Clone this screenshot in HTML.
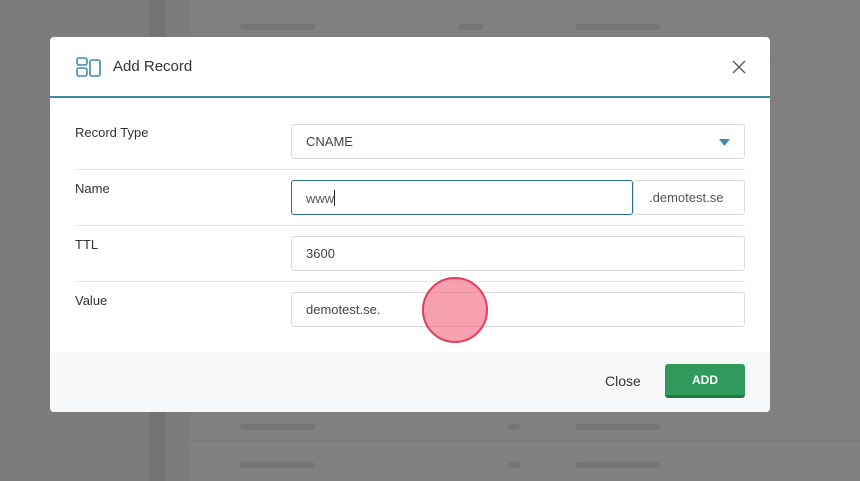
<!DOCTYPE html>
<html><head><style>
*{box-sizing:border-box;margin:0;padding:0}
body{width:860px;height:481px;overflow:hidden;background:#7c7c7c;font-family:"Liberation Sans",sans-serif;position:relative}
.strip{position:absolute;left:150px;top:0;width:16px;height:481px;background:#737373}
.tbl{position:absolute;left:190px;top:0;right:0;height:481px;background:#808080}
.rowb{position:absolute;left:190px;right:0;height:1px;background:#7a7a7a}
.ghost{position:absolute;height:6px;background:#757575;border-radius:3px}
.modal{position:absolute;left:50px;top:37px;width:720px;height:375px;background:#fff;border-radius:4px;overflow:hidden}
.hdr{height:61px;border-bottom:2px solid #3f8aa8;position:relative}
.title{position:absolute;left:63px;top:21px;font-size:15px;color:#333}
.foot{position:absolute;left:0;right:0;top:315px;bottom:0;background:#f7f8fa}
.lbl{position:absolute;left:25px;font-size:13px;color:#333}
.inp{position:absolute;left:241px;width:454px;height:35px;border:1px solid #dcdcdc;border-radius:3px;font-size:13px;color:#444;padding:9px 14px}
.sep{position:absolute;left:25px;width:670px;height:1px;background:#e6e6e6}
</style></head><body>
<div class="tbl"></div><div class="strip"></div>
<div class="rowb" style="top:60px"></div><div class="rowb" style="top:440px"></div>
<div class="ghost" style="left:240px;top:24px;width:75px"></div>
<div class="ghost" style="left:458px;top:24px;width:25px"></div>
<div class="ghost" style="left:575px;top:24px;width:85px"></div>
<div class="ghost" style="left:240px;top:424px;width:75px"></div>
<div class="ghost" style="left:508px;top:424px;width:12px"></div>
<div class="ghost" style="left:575px;top:424px;width:85px"></div>
<div class="ghost" style="left:240px;top:462px;width:75px"></div>
<div class="ghost" style="left:508px;top:462px;width:12px"></div>
<div class="ghost" style="left:575px;top:462px;width:85px"></div>
<div class="modal">
 <div class="hdr">
  <svg style="position:absolute;left:26px;top:20px" width="26" height="20" viewBox="0 0 26 20" fill="none" stroke="#3f8aa8" stroke-width="1.6"><rect x="1" y="1" width="10" height="7" rx="2"/><rect x="1" y="11" width="10" height="8" rx="2"/><rect x="14" y="3" width="10" height="16" rx="2"/></svg>
  <div class="title">Add Record</div>
  <svg style="position:absolute;left:682px;top:23px" width="14" height="14" viewBox="0 0 14 14" stroke="#555" stroke-width="1.3"><path d="M1 1L13 13M13 1L1 13"/></svg>
 </div>
 <div class="lbl" style="top:88px">Record Type</div>
 <div class="inp" style="top:87px">CNAME<svg style="position:absolute;right:14px;top:14px" width="11" height="7"><path d="M0 0H11L5.5 7Z" fill="#3f8aa8"/></svg></div>
 <div class="sep" style="top:132px"></div>
 <div class="lbl" style="top:144px">Name</div>
 <div class="inp" style="top:143px;width:342px;border-color:#2c6f8a;color:#555">www<span style="display:inline-block;width:1px;height:16px;background:#222;vertical-align:-3px"></span></div>
 <div class="inp" style="top:143px;left:583px;width:112px;background:#fff;padding:9px 15px;color:#555">.demotest.se</div>
 <div class="sep" style="top:188px"></div>
 <div class="lbl" style="top:200px">TTL</div>
 <div class="inp" style="top:199px">3600</div>
 <div class="sep" style="top:244px"></div>
 <div class="lbl" style="top:256px">Value</div>
 <div class="inp" style="top:255px">demotest.se.</div>
 <div style="position:absolute;left:372px;top:240px;width:66px;height:66px;border-radius:50%;background:rgba(243,110,133,0.65);border:2px solid #e0405e"></div>
 <div class="foot">
  <div style="position:absolute;left:555px;top:21px;font-size:14px;color:#333">Close</div>
  <div style="position:absolute;left:615px;top:12px;width:80px;height:34px;background:#2f9a5a;border-radius:3px;border-bottom:3px solid #237a45;color:#fff;font-weight:bold;font-size:12px;text-align:center;line-height:32px">ADD</div>
 </div>
</div>
</body></html>
